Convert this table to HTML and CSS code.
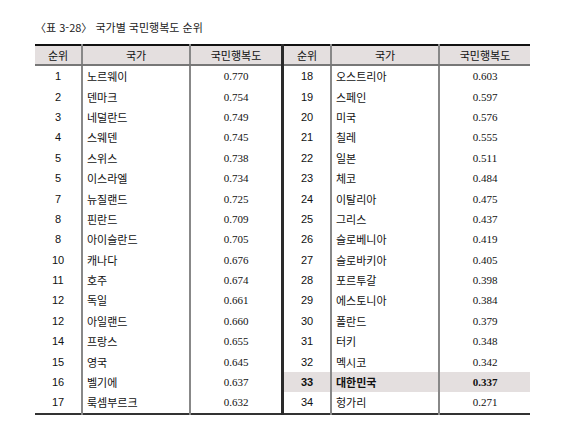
FILE: index.html
```html
<!DOCTYPE html>
<html lang="ko">
<head>
    <meta charset="UTF-8">
    <title>국가별 국민행복도 순위</title>
    <link rel="stylesheet" href="styles.css">
</head>
<body>
    <div class="page">
        <p class="caption">〈표 3-28〉 국가별 국민행복도 순위</p>

        <table class="rank">
            <thead>
                <tr>
                    <th class="c-rank">순위</th>
                    <th class="c-name">국가</th>
                    <th class="c-val split">국민행복도</th>
                    <th class="c-rank">순위</th>
                    <th class="c-name">국가</th>
                    <th class="c-val last">국민행복도</th>
                </tr>
            </thead>
            <tbody>
                <tr><td class="num">1</td><td class="name">노르웨이</td><td class="val split">0.770</td><td class="num">18</td><td class="name">오스트리아</td><td class="val last">0.603</td></tr>
                <tr><td class="num">2</td><td class="name">덴마크</td><td class="val split">0.754</td><td class="num">19</td><td class="name">스페인</td><td class="val last">0.597</td></tr>
                <tr><td class="num">3</td><td class="name">네덜란드</td><td class="val split">0.749</td><td class="num">20</td><td class="name">미국</td><td class="val last">0.576</td></tr>
                <tr><td class="num">4</td><td class="name">스웨덴</td><td class="val split">0.745</td><td class="num">21</td><td class="name">칠레</td><td class="val last">0.555</td></tr>
                <tr><td class="num">5</td><td class="name">스위스</td><td class="val split">0.738</td><td class="num">22</td><td class="name">일본</td><td class="val last">0.511</td></tr>
                <tr><td class="num">5</td><td class="name">이스라엘</td><td class="val split">0.734</td><td class="num">23</td><td class="name">체코</td><td class="val last">0.484</td></tr>
                <tr><td class="num">7</td><td class="name">뉴질랜드</td><td class="val split">0.725</td><td class="num">24</td><td class="name">이탈리아</td><td class="val last">0.475</td></tr>
                <tr><td class="num">8</td><td class="name">핀란드</td><td class="val split">0.709</td><td class="num">25</td><td class="name">그리스</td><td class="val last">0.437</td></tr>
                <tr><td class="num">8</td><td class="name">아이슬란드</td><td class="val split">0.705</td><td class="num">26</td><td class="name">슬로베니아</td><td class="val last">0.419</td></tr>
                <tr><td class="num">10</td><td class="name">캐나다</td><td class="val split">0.676</td><td class="num">27</td><td class="name">슬로바키아</td><td class="val last">0.405</td></tr>
                <tr><td class="num">11</td><td class="name">호주</td><td class="val split">0.674</td><td class="num">28</td><td class="name">포르투갈</td><td class="val last">0.398</td></tr>
                <tr><td class="num">12</td><td class="name">독일</td><td class="val split">0.661</td><td class="num">29</td><td class="name">에스토니아</td><td class="val last">0.384</td></tr>
                <tr><td class="num">12</td><td class="name">아일랜드</td><td class="val split">0.660</td><td class="num">30</td><td class="name">폴란드</td><td class="val last">0.379</td></tr>
                <tr><td class="num">14</td><td class="name">프랑스</td><td class="val split">0.655</td><td class="num">31</td><td class="name">터키</td><td class="val last">0.348</td></tr>
                <tr><td class="num">15</td><td class="name">영국</td><td class="val split">0.645</td><td class="num">32</td><td class="name">멕시코</td><td class="val last">0.342</td></tr>
                <tr><td class="num">16</td><td class="name">벨기에</td><td class="val split">0.637</td><td class="num hl">33</td><td class="name hl">대한민국</td><td class="val last hl">0.337</td></tr>
                <tr><td class="num">17</td><td class="name">룩셈부르크</td><td class="val split">0.632</td><td class="num">34</td><td class="name">헝가리</td><td class="val last">0.271</td></tr>
            </tbody>
        </table>
    </div>
</body>
</html>
```
FILE: styles.css
```css
body {
    margin: 0;
    background-color: #fff;
    color: #111;
    font-family: "Noto Sans CJK KR", "Noto Sans", sans-serif;
}
.page {
    padding: 20px 0 0 35px;
}
.caption {
    margin: 0 0 9px;
    font-size: 11px;
    line-height: 15px;
    color: #222;
}
.rank {
    border-collapse: collapse;
    width: 491px;
    table-layout: fixed;
    border-top: 2px solid #111;
    border-bottom: 2px solid #333;
}
.rank th {
    height: 18px;
    padding: 0;
    background-color: #e4dfdf;
    border-bottom: 2px solid #777;
    font-size: 11px;
    font-weight: normal;
    text-align: center;
}
.rank td {
    height: 20.4px;
    padding: 0;
    font-size: 11px;
}
.rank th,
.rank td {
    border-left: 2px solid #888;
}
.rank th.c-rank:first-child,
.rank td:first-child {
    border-left: none;
}
.rank .split {
    border-right: 3px solid #2a2a2a;
}
.c-rank { width: 46px; }
.c-name { width: 106px; }
.c-val { width: 90px; }
.num {
    text-align: center;
    font-family: "Liberation Sans", Arial, sans-serif;
    font-size: 11.5px;
}
.name {
    padding-left: 4px !important;
    text-align: left;
}
.val {
    text-align: center;
    font-family: "Liberation Serif", "Times New Roman", serif;
    font-size: 12.5px;
}
.rank .hl {
    background-color: #e4dfdf;
    font-weight: bold;
}
```
